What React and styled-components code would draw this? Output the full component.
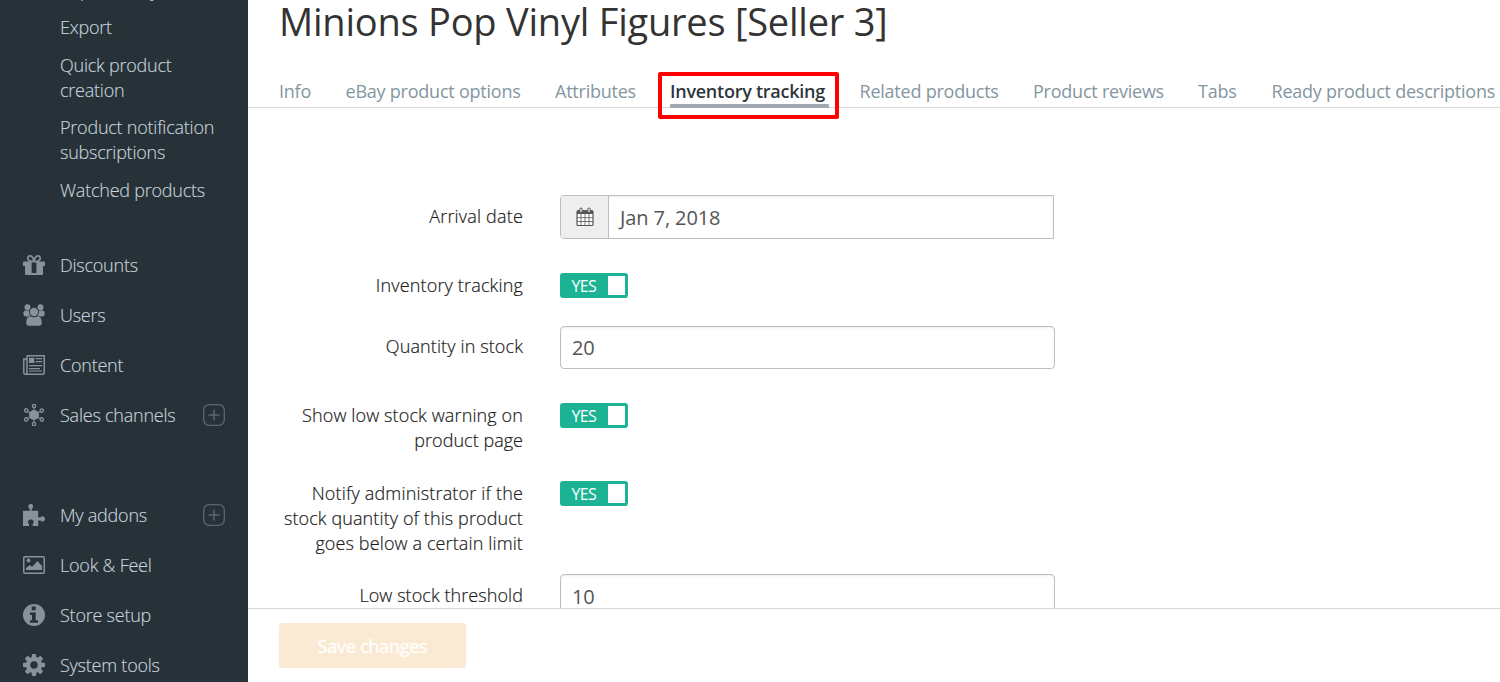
import React from 'react';
import styled, { createGlobalStyle } from 'styled-components';

const Global = createGlobalStyle`
  * { box-sizing: border-box; }
  body { margin: 0; font-family: "Open Sans", sans-serif; background: #fff; }
`;
const Page = styled.div`
  display: flex; width: 1500px; height: 682px; overflow: hidden;
`;
const Sidebar = styled.nav`
  width: 248px; flex: none; height: 682px; background: #263238; color: #c8d2dd;
  font-size: 18px; font-weight: 300; line-height: 25px; letter-spacing: -.23px; overflow: hidden;
  -webkit-text-stroke: .15px #c8d2dd;
`;
const SubMenu = styled.div`
  display: flex; flex-direction: column; gap: 12.5px;
  margin-top: -22.5px; padding-left: 60px; margin-bottom: 37.5px;
`;
const SubItem = styled.a`
  display: block; white-space: pre;
`;
const Group = styled.div`margin-bottom: 50px;`;
const MenuItem = styled.a`
  height: 50px; display: flex; align-items: center; padding: 0 23px;
  svg { flex: none; }
`;
const MenuLabel = styled.span`
  flex: 1; margin-left: 15px; white-space: nowrap;
`;
const Main = styled.main`
  flex: 1; min-width: 0; height: 682px; display: flex; flex-direction: column; overflow: hidden;
`;
const Title = styled.h1`
  margin: 0; height: 72px; padding-left: 31px; font-size: 38px; font-weight: 400;
  line-height: 43px; color: #333; white-space: nowrap; letter-spacing: -.22px;
`;
const TabBar = styled.div`
  height: 36px; border-bottom: 1px solid #d6d6d6; padding-left: 31px; display: flex; flex: none;
`;
const Tab = styled.a`
  position: relative; flex: none; width: ${p => p.$w}px; height: 35px; font-size: 18px; line-height: 38px;
  white-space: nowrap; color: ${p => (p.$on ? '#2f363b' : '#8496a0')}; font-weight: ${p => (p.$on ? 600 : 400)};
  letter-spacing: ${p => (p.$on ? -0.26 : -0.23)}px;
`;
const Underline = styled.span`
  position: absolute; left: 0; top: 32px; width: 159px; height: 4px; background: #a0a9b1; border-radius: 1px;
`;
const Highlight = styled.span`
  position: absolute; left: -12px; top: 0; width: 181px; height: 47px; border: 4px solid #fe0000; border-radius: 2px;
`;
const Form = styled.div`
  flex: 1; min-height: 0; overflow: hidden; padding: 87px 0 0 31px;
`;
const Row = styled.div`
  display: flex; align-items: flex-start; height: ${p => p.$h}px;
`;
const Label = styled.label`
  width: 244px; margin-right: 37px; padding-top: ${p => p.$top}px; text-align: right; font-size: 18px; font-weight: 300;
  line-height: 25px; color: #1c1c1c; white-space: pre; -webkit-text-stroke: .2px #1c1c1c;
`;
const Line = styled.span`display: block; letter-spacing: ${p => p.$ls || 0.12}px;`;
const Field = styled.div`
  width: ${p => (p.$w || 495)}px; height: ${p => (p.$tall ? 44 : 43)}px; display: flex; border: 1px solid #bfbfbf;
  border-radius: ${p => (p.$tall ? '4px 0 0 4px' : '4px')}; overflow: hidden;
  box-shadow: inset 0 1px 2px rgba(0,0,0,.08);
`;
const Addon = styled.div`
  width: 48px; background: #eee; border-right: 1px solid #bfbfbf; display: flex; align-items: center; justify-content: center;
`;
const Value = styled.span`
  padding-left: 11px; font-size: 20px; line-height: ${p => (p.$tall ? 43 : 41)}px; color: #555; letter-spacing: -.1px;
`;
const Switch = styled.div`
  width: 68px; height: 25px; border-radius: 3px; background: #1bb394; color: #fff; display: flex; align-items: center;
  justify-content: space-between; padding: 0 3px 0 11.500px; font-size: 16px; line-height: 27px; letter-spacing: -.7px;
`;
const SwitchText = styled.span`padding-top: 1px; line-height: 24px;`;
const Knob = styled.i`width: 17px; height: 19px; background: #fff;`;
const Footer = styled.footer`
  height: 74px; flex: none; border-top: 1px solid #d6d6d6; padding: 14px 31px; background: #fff;
`;
const Save = styled.button`
  display: block; width: 187px; height: 45px; border: 0; border-radius: 3px; padding: 1px 0 0; background: #fbead3; color: #fffdfa;
  font: 400 18px "Open Sans", sans-serif; letter-spacing: -.25px; -webkit-text-stroke: .5px #fffdfa;
`;

const Icon = ({ children }) => (
  <svg width="22" height="22" viewBox="0 0 22 22" fill="#87929c" stroke="none">{children}</svg>
);
const BG = '#263238';
const spokes = [0, 60, 120, 180, 240, 300];
const icons = {
  gift: (
    <Icon>
      <path fillRule="evenodd" d="M1 7.500h20a1 1 0 0 1 1 1V12h-2v8a1 1 0 0 1-1 1H3a1 1 0 0 1-1-1v-8H0V8.500a1 1 0 0 1 1-1zM8.600 8.300v10.700h4.800V8.300z" />
      <path d="M11 7.200C9 7.500 4.800 7.500 4.800 4.300 4.800 0.800 9.500 0.500 11 7zM11 7.200c2 .3 6.200.3 6.200-2.900 0-3.500-4.700-3.800-6.200 2.700z" fill="none" stroke="#87929c" strokeWidth="1.700" />
    </Icon>
  ),
  users: (
    <Icon>
      <circle cx="4.500" cy="3.200" r="3" /><circle cx="17.500" cy="3.200" r="3" />
      <path d="M2 6.500h4l2 6H2.500C0 12.500-.6 7.500 2 6.500zM20 6.500h-4l-2 6h5.500c2.500 0 3.100-5 .5-6z" />
      <circle cx="11" cy="8" r="5" fill={BG} /><circle cx="11" cy="8" r="4.200" />
      <path d="M7.200 12q3.800 2.300 7.600 0c3 .3 4.200 3.500 4.200 7 0 2-1 3-3 3H6c-2 0-3-1-3-3 0-3.500 1.200-6.700 4.200-7z" stroke={BG} strokeWidth=".5" />
    </Icon>
  ),
  news: (
    <Icon>
      <path d="M4 1.700h17.200v17.100q0 1.500-1.500 1.500H2.300Q.8 20.300.8 18.700V5H4M4 1.700v17q0 1.600-1.600 1.600" fill="none" stroke="#87929c" strokeWidth="1.500" />
      <path d="M6 3.800h5.300V9H6zM12.600 4h6.500v1.300h-6.500zM12.600 7h6.500v1.300h-6.500zM6 11h13.100v1.300H6zM6 14h11v1.300H6zM6 16.500h13.100v1H6z" />
    </Icon>
  ),
  channels: (
    <Icon>
      <circle cx="11" cy="11" r="5" />
      {spokes.map(a => (
        <g key={a} transform={`rotate(${a} 11 11)`} fill="none" stroke="#87929c">
          <path d="M11 7V4" strokeWidth="1" /><circle cx="11" cy="2" r="1.650" strokeWidth="1.300" />
        </g>
      ))}
    </Icon>
  ),
  puzzle: (
    <Icon>
      <path d="M0 6.800h6.800V5C5.500 4.200 5 2.700 5.500 1.500c.8-1.900 3.600-1.900 4.400 0 .5 1.200 0 2.700-1.300 3.500v1.800h6.600v6.700h2.300c.8-1.200 2-1.500 3.100-.8 1.900 1 1.900 3.600 0 4.600-1.100.7-2.300.4-3.100-.8h-2.300V22H9.600v-1.800c1.300-1.200 1.300-2.500.6-3.600-1-1.600-3.800-1.600-4.800 0-.7 1.100-.7 2.400.6 3.600V22H0z" />
    </Icon>
  ),
  image: (
    <Icon>
      <rect x=".75" y="2.700" width="20.500" height="16.500" rx="1" fill="none" stroke="#87929c" strokeWidth="1.500" />
      <circle cx="5.500" cy="6.500" r="1.900" /><path d="M3 16v-2l4-3 2 2 5.500-6L19 12v4z" />
    </Icon>
  ),
  info: (
    <Icon>
      <circle cx="11" cy="11" r="11" />
      <path fill={BG} d="M8.700 2.500h4v3.700h-4zM7 8.500h5.700v7.800H15v2.500H7v-2.500h2v-5.300H7z" />
    </Icon>
  ),
  gear: (
    <Icon>
      {[0, 45, 90, 135].map(a => <rect key={a} x="8.800" y="0" width="4.400" height="22" rx="1" transform={`rotate(${a} 11 11)`} />)}
      <circle cx="11" cy="11" r="8.200" /><circle cx="11" cy="11" r="3.700" fill={BG} />
    </Icon>
  ),
};
const Plus = () => (
  <svg width="22" height="22" viewBox="0 0 22 22" fill="none" stroke="#5c666f" strokeWidth="1.300">
    <rect x=".7" y=".7" width="20.600" height="20.600" rx="5.500" />
    <path d="M5.500 11h11M11 5.500v11" strokeWidth="1.500" />
  </svg>
);
const Calendar = () => (
  <svg width="18" height="20" viewBox="0 0 18 20" fill="none" stroke="#555">
    <rect x="1" y="4" width="16" height="14.500" rx="1" strokeWidth="1.200" fill="#fff" />
    <path d="M1 3.200h16V7H1z" fill="#555" stroke="none" />
    <path d="M5 7v11M9 7v11M13 7v11M1 10.700h16M1 14.500h16" strokeWidth=".8" />
    <rect x="3.800" y="1" width="2.400" height="4.500" rx="1.200" fill="#eee" /><rect x="11.800" y="1" width="2.400" height="4.500" rx="1.200" fill="#eee" />
  </svg>
);

const Item = ({ icon, plus, children }) => (
  <MenuItem>{icons[icon]}<MenuLabel>{children}</MenuLabel>{plus && <Plus />}</MenuItem>
);
const Yes = () => <Switch><SwitchText>YES</SwitchText><Knob /></Switch>;

export default function App() {
  return (
    <Page>
      <Global />
      <Sidebar>
        <SubMenu>
          <SubItem>Import entry</SubItem>
          <SubItem>Export</SubItem>
          <SubItem>{'Quick product\ncreation'}</SubItem>
          <SubItem>{'Product notification\nsubscriptions'}</SubItem>
          <SubItem>Watched products</SubItem>
        </SubMenu>
        <Group>
          <Item icon="gift">Discounts</Item>
          <Item icon="users">Users</Item>
          <Item icon="news">Content</Item>
          <Item icon="channels" plus>Sales channels</Item>
        </Group>
        <Group>
          <Item icon="puzzle" plus>My addons</Item>
          <Item icon="image">Look &amp; Feel</Item>
          <Item icon="info">Store setup</Item>
          <Item icon="gear">System tools</Item>
        </Group>
      </Sidebar>
      <Main>
        <Title>Minions Pop Vinyl Figures [Seller 3]</Title>
        <TabBar>
          <Tab $w={66.5}>Info</Tab>
          <Tab $w={209.5}>eBay product options</Tab>
          <Tab $w={115}>Attributes</Tab>
          <Tab $w={189.500} $on>Inventory tracking<Underline /><Highlight /></Tab>
          <Tab $w={173.500}>Related products</Tab>
          <Tab $w={165}>Product reviews</Tab>
          <Tab $w={73.500}>Tabs</Tab>
          <Tab $w={228}>Ready product descriptions</Tab>
        </TabBar>
        <Form>
          <Row $h={78}>
            <Label $top={9}><Line $ls={0.18}>Arrival date</Line></Label>
            <Field $w={494} $tall><Addon><Calendar /></Addon><Value $tall>Jan 7, 2018</Value></Field>
          </Row>
          <Row $h={53}><Label $top={0}><Line $ls={0.16}>Inventory tracking</Line></Label><Yes /></Row>
          <Row $h={77}><Label $top={8}><Line>Quantity in stock</Line></Label><Field><Value>20</Value></Field></Row>
          <Row $h={78}><Label $top={0}><Line>Show low stock warning on</Line><Line $ls={0.03}>product page</Line></Label><Yes /></Row>
          <Row $h={93}>
            <Label $top={0}>
              <Line $ls={0.17}>Notify administrator if the</Line><Line $ls={0.1}>stock quantity of this product</Line><Line>goes below a certain limit</Line>
            </Label>
            <Yes />
          </Row>
          <Row $h={43}><Label $top={9}><Line $ls={0.07}>Low stock threshold</Line></Label><Field><Value $tall>10</Value></Field></Row>
        </Form>
        <Footer><Save>Save changes</Save></Footer>
      </Main>
    </Page>
  );
}
